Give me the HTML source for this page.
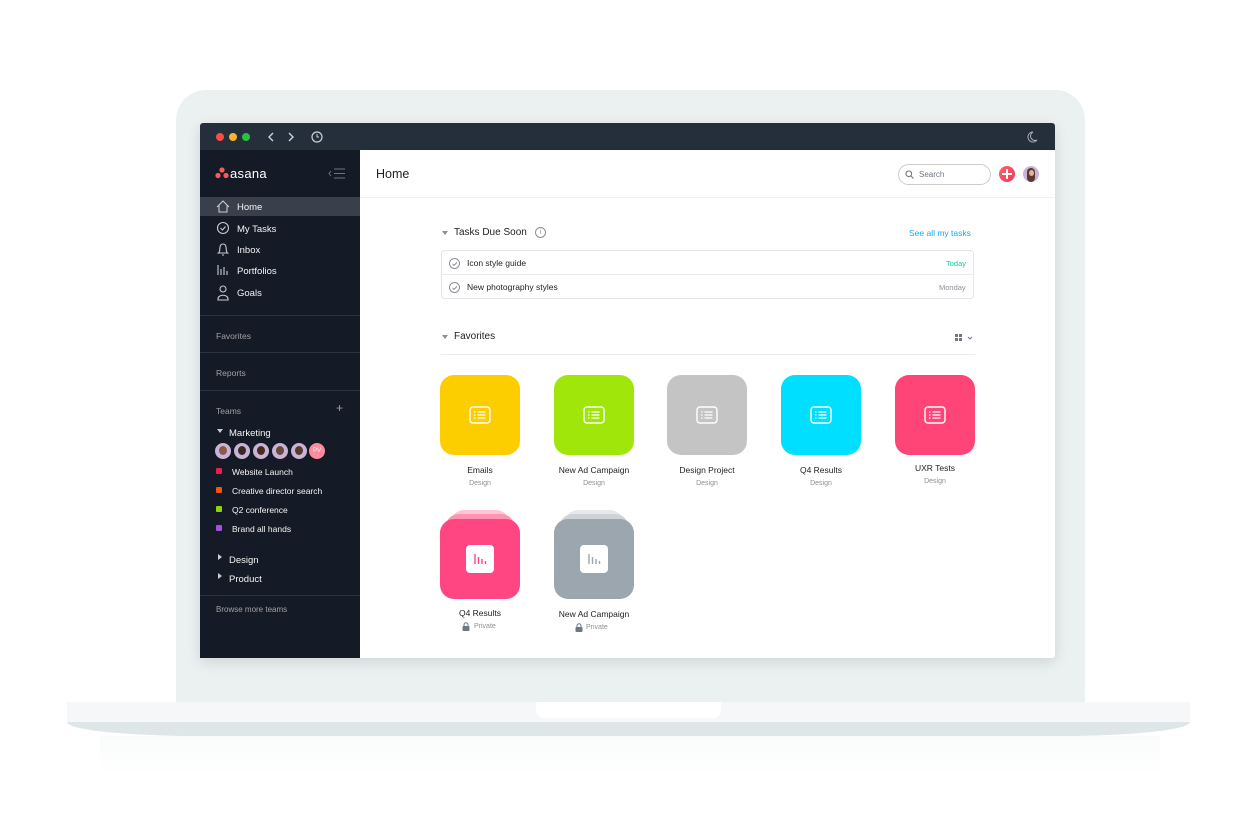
<!DOCTYPE html>
<html><head><meta charset="utf-8"><style>
*{margin:0;padding:0;box-sizing:border-box}
body{width:1256px;height:840px;background:#fff;position:relative;overflow:hidden;font-family:"Liberation Sans",sans-serif}
.a{position:absolute}
.sb{color:#f5f4f3;font-size:9.5px}
.sbg{color:#a2a0a2;font-size:8.5px}
.div{position:absolute;left:200px;width:160px;height:1px;background:#2c333f}
.tile{position:absolute;width:80px;height:80px;border-radius:14px}
.lbl{position:absolute;width:120px;text-align:center;font-size:8.5px;color:#1e1f21}
.sub{position:absolute;width:120px;text-align:center;font-size:7px;color:#8c8f94}
.ico{position:absolute;left:29px;top:31px}
.dot{position:absolute;width:6px;height:6px;border-radius:1px;left:216px}
.av{position:absolute;top:443px;width:16px;height:16px;border-radius:50%;background:#c8b3d9;overflow:hidden}
.av i{position:absolute;left:4px;top:3px;width:8px;height:9px;border-radius:50%;background:#8a5a44}
</style></head><body>
<!-- laptop -->
<div class="a" style="left:176px;top:90px;width:909px;height:620px;background:#ebf0f0;border-radius:30px 30px 0 0"></div>
<div class="a" style="left:67px;top:702px;width:1123px;height:20px;background:#f6f7f9"></div>
<div class="a" style="left:67px;top:722px;width:1123px;height:14px;background:#dfe6e7;border-radius:0 0 130px 130px/0 0 14px 14px"></div>
<div class="a" style="left:536px;top:702px;width:185px;height:16px;background:#fff;border-radius:0 0 8px 8px"></div>
<div class="a" style="left:100px;top:736px;width:1060px;height:40px;background:linear-gradient(#fafbfb,#fff)"></div>
<!-- screen -->
<div class="a" style="left:200px;top:123px;width:855px;height:535px;background:#fff;box-shadow:0 4px 14px rgba(0,0,0,.12);border-radius:3px;overflow:hidden">
</div>
<div class="a" style="left:200px;top:123px;width:855px;height:27px;background:#252e3b;border-radius:3px 3px 0 0"></div>
<div class="a" style="left:216px;top:133px;width:8px;height:8px;border-radius:50%;background:#fb4c48"></div>
<div class="a" style="left:229px;top:133px;width:8px;height:8px;border-radius:50%;background:#fdb52a"></div>
<div class="a" style="left:242px;top:133px;width:8px;height:8px;border-radius:50%;background:#27c23f"></div>
<svg class="a" style="left:266px;top:130px" width="60" height="14"><path d="M7 3l-4 4 4 4M23 3l4 4-4 4" stroke="#cfd3d8" stroke-width="1.4" fill="none"/><circle cx="51" cy="7" r="5" stroke="#cfd3d8" stroke-width="1.2" fill="none"/><path d="M51 4v3h2" stroke="#cfd3d8" fill="none"/></svg>
<svg class="a" style="left:1025px;top:130px" width="14" height="14"><path d="M8 2a5 5 0 1 0 4 8 4 4 0 0 1-4-8z" stroke="#aab" fill="none"/></svg>
<!-- sidebar -->
<div class="a" style="left:200px;top:150px;width:160px;height:508px;background:#151b26"></div>
<svg class="a" style="left:215px;top:167px" width="14" height="12"><circle cx="7" cy="3" r="2.6" fill="#f95a5f"/><circle cx="3" cy="8.5" r="2.6" fill="#f95a5f"/><circle cx="11" cy="8.5" r="2.6" fill="#f95a5f"/></svg>
<div class="a" style="left:230px;top:166px;color:#fff;font-size:13px;letter-spacing:.3px">asana</div>
<svg class="a" style="left:328px;top:168px" width="18" height="11"><path d="M3 3L1 5.5 3 8M6 1h11M6 5.5h11M6 10h11" stroke="#6d7480" fill="none"/></svg>
<div class="a" style="left:200px;top:197px;width:160px;height:19px;background:#39404b"></div>
<svg class="a" style="left:215px;top:199px" width="16" height="105" fill="none" stroke="#c9ccd1" stroke-width="1.1">
<path d="M2 8L8 2l6 6M4 6.5V13h8V6.5"/>
<circle cx="8" cy="29" r="5.5"/><path d="M5.5 29l2 2 3-3.5"/>
<path d="M3.5 54c1.5-1 1-3 1.5-6a3 3 0 0 1 6 0c.5 3 0 5 1.5 6zM7 56h2"/>
<path d="M3 66v10M6 70v6M9 68v8M12 72v4"/>
<circle cx="8" cy="90" r="3"/><path d="M3 100c0-5 10-5 10 0v1H3z"/>
</svg>
<div class="a sb" style="left:237px;top:202px">Home</div>
<div class="a sb" style="left:237px;top:224px">My Tasks</div>
<div class="a sb" style="left:237px;top:245px">Inbox</div>
<div class="a sb" style="left:237px;top:266px">Portfolios</div>
<div class="a sb" style="left:237px;top:288px">Goals</div>
<div class="div" style="top:315px"></div>
<div class="a sbg" style="left:216px;top:331px">Favorites</div>
<div class="div" style="top:352px"></div>
<div class="a sbg" style="left:216px;top:368px">Reports</div>
<div class="div" style="top:390px"></div>
<div class="a sbg" style="left:216px;top:406px">Teams</div>
<div class="a" style="left:336px;top:401px;color:#a2a0a2;font-size:12px">+</div>
<div class="a" style="left:217px;top:429px;width:0;height:0;border-left:3.5px solid transparent;border-right:3.5px solid transparent;border-top:4px solid #c9ccd1"></div>
<div class="a sb" style="left:229px;top:428px">Marketing</div>
<div class="av" style="left:215px"><i></i></div>
<div class="av" style="left:234px"><i style="background:#3b2820"></i></div>
<div class="av" style="left:253px"><i style="background:#4a2b1d"></i></div>
<div class="av" style="left:272px"><i style="background:#6b4a3a"></i></div>
<div class="av" style="left:291px"><i style="background:#5a3a2a"></i></div>
<div class="av" style="left:309px;background:#fc8b9e;color:#fff;font-size:6px;text-align:center;line-height:16px">PV</div>
<div class="dot" style="top:468px;background:#ed1c4e"></div>
<div class="a sb" style="left:232px;top:467px;font-size:8.5px">Website Launch</div>
<div class="dot" style="top:487px;background:#f0570c"></div>
<div class="a sb" style="left:232px;top:486px;font-size:8.5px">Creative director search</div>
<div class="dot" style="top:506px;background:#8fd40a"></div>
<div class="a sb" style="left:232px;top:505px;font-size:8.5px">Q2 conference</div>
<div class="dot" style="top:525px;background:#a54ee1"></div>
<div class="a sb" style="left:232px;top:524px;font-size:8.5px">Brand all hands</div>
<div class="a" style="left:218px;top:554px;border-top:3.5px solid transparent;border-bottom:3.5px solid transparent;border-left:4px solid #c9ccd1"></div>
<div class="a sb" style="left:229px;top:555px">Design</div>
<div class="a" style="left:218px;top:573px;border-top:3.5px solid transparent;border-bottom:3.5px solid transparent;border-left:4px solid #c9ccd1"></div>
<div class="a sb" style="left:229px;top:574px">Product</div>
<div class="div" style="top:595px"></div>
<div class="a sbg" style="left:216px;top:605px;font-size:8px">Browse more teams</div>
<!-- header -->
<div class="a" style="left:376px;top:167px;font-size:12.5px;color:#1e1f21">Home</div>
<div class="a" style="left:360px;top:197px;width:695px;height:1px;background:#eef0f2"></div>
<div class="a" style="left:898px;top:164px;width:93px;height:21px;border:1px solid #cfcbcb;border-radius:11px"></div>
<svg class="a" style="left:905px;top:170px" width="9" height="9"><circle cx="3.8" cy="3.8" r="2.8" stroke="#6f7782" fill="none" stroke-width="1.1"/><path d="M6 6l2.5 2.5" stroke="#6f7782" stroke-width="1.1"/></svg>
<div class="a" style="left:919px;top:170px;font-size:8px;color:#6f7782">Search</div>
<div class="a" style="left:999px;top:166px;width:16px;height:16px;border-radius:50%;background:linear-gradient(135deg,#fc636b,#f0365e)"></div>
<div class="a" style="left:1002px;top:173.2px;width:10px;height:1.6px;background:#fff"></div>
<div class="a" style="left:1006.2px;top:169px;width:1.6px;height:10px;background:#fff"></div>
<div class="a" style="left:1023px;top:166px;width:16px;height:16px;border-radius:50%;background:#c8b3d9;overflow:hidden"><div style="position:absolute;left:4px;top:2px;width:8px;height:14px;border-radius:4px;background:#5a3a2a"></div><div style="position:absolute;left:5.5px;top:4px;width:5px;height:6px;border-radius:50%;background:#e0b49a"></div></div>
<!-- tasks -->
<div class="a" style="left:442px;top:231px;border-left:3.5px solid transparent;border-right:3.5px solid transparent;border-top:4px solid #8c8f94"></div>
<div class="a" style="left:454px;top:227px;font-size:10px;color:#1e1f21">Tasks Due Soon</div>
<div class="a" style="left:535px;top:227px;width:11px;height:11px;border:1px solid #8c8f94;border-radius:50%;font-size:7px;color:#8c8f94;text-align:center;line-height:9px">i</div>
<div class="a" style="left:909px;top:228px;font-size:8.5px;color:#14aaf5">See all my tasks</div>
<div class="a" style="left:441px;top:250px;width:533px;height:49px;border:1px solid #e2e6ea;border-radius:4px"></div>
<div class="a" style="left:442px;top:274px;width:531px;height:1px;background:#e8ecee"></div>
<div class="a" style="left:449px;top:258px;width:11px;height:11px;border:1px solid #8c8f94;border-radius:50%"></div>
<div class="a" style="left:449px;top:282px;width:11px;height:11px;border:1px solid #8c8f94;border-radius:50%"></div>
<svg class="a" style="left:449px;top:258px" width="11" height="36"><path d="M3.5 5.8l1.6 1.6 2.8-3M3.5 29.8l1.6 1.6 2.8-3" stroke="#8c8f94" fill="none"/></svg>
<div class="a" style="left:467px;top:258px;font-size:8.5px;color:#1e1f21">Icon style guide</div>
<div class="a" style="left:467px;top:282px;font-size:8.5px;color:#1e1f21">New photography styles</div>
<div class="a" style="left:946px;top:259px;font-size:7.5px;color:#13ce9c">Today</div>
<div class="a" style="left:939px;top:283px;font-size:7.5px;color:#8c8f94">Monday</div>
<!-- favorites -->
<div class="a" style="left:442px;top:335px;border-left:3.5px solid transparent;border-right:3.5px solid transparent;border-top:4px solid #8c8f94"></div>
<div class="a" style="left:454px;top:331px;font-size:10px;color:#1e1f21">Favorites</div>
<svg class="a" style="left:955px;top:334px" width="20" height="8"><rect x="0" y="0" width="3" height="3" fill="#6f7782"/><rect x="4" y="0" width="3" height="3" fill="#6f7782"/><rect x="0" y="4" width="3" height="3" fill="#6f7782"/><rect x="4" y="4" width="3" height="3" fill="#6f7782"/><path d="M13 3l2 2 2-2" stroke="#6f7782" fill="none"/></svg>
<div class="a" style="left:441px;top:354px;width:534px;height:1px;background:#e8ecee"></div>

<svg width="0" height="0" style="position:absolute"><defs><g id="li"><rect x="1" y="1" width="20" height="16" rx="3" stroke="#fff" stroke-width="1.4" fill="none"/><path d="M5 6h1.5M8.5 6h8M5 9h1.5M8.5 9h8M5 12h1.5M8.5 12h8" stroke="#fff" stroke-width="1.3"/></g></defs></svg>
<div class="tile" style="left:440px;top:375px;background:#fcce00"><svg class="ico" width="22" height="18"><use href="#li"/></svg></div>
<div class="tile" style="left:554px;top:375px;background:#a0e60b"><svg class="ico" width="22" height="18"><use href="#li"/></svg></div>
<div class="tile" style="left:667px;top:375px;background:#c4c4c4"><svg class="ico" width="22" height="18"><use href="#li"/></svg></div>
<div class="tile" style="left:781px;top:375px;background:#00dfff"><svg class="ico" width="22" height="18"><use href="#li"/></svg></div>
<div class="tile" style="left:895px;top:375px;background:#ff4478"><svg class="ico" width="22" height="18"><use href="#li"/></svg></div>
<div class="lbl" style="left:420px;top:465px">Emails</div><div class="sub" style="left:420px;top:480px">Design</div>
<div class="lbl" style="left:534px;top:465px">New Ad Campaign</div><div class="sub" style="left:534px;top:480px">Design</div>
<div class="lbl" style="left:647px;top:465px">Design Project</div><div class="sub" style="left:647px;top:480px">Design</div>
<div class="lbl" style="left:761px;top:465px">Q4 Results</div><div class="sub" style="left:761px;top:480px">Design</div>
<div class="lbl" style="left:875px;top:463px">UXR Tests</div><div class="sub" style="left:875px;top:478px">Design</div>

<div class="tile" style="left:450px;top:510px;width:60px;height:30px;background:#ffc6d5"></div>
<div class="tile" style="left:445px;top:514px;width:70px;height:30px;background:#ff93b2"></div>
<div class="tile" style="left:440px;top:519px;background:#ff4683"></div>
<div class="tile" style="left:564px;top:510px;width:60px;height:30px;background:#e6e9ec"></div>
<div class="tile" style="left:559px;top:514px;width:70px;height:30px;background:#cdd3d8"></div>
<div class="tile" style="left:554px;top:519px;background:#9ca6af"></div>
<svg class="a" style="left:466px;top:545px" width="28" height="28"><rect width="28" height="28" rx="4" fill="#fff"/><path d="M9 9v10M12.5 12v7M16 14v5M19.5 16v3" stroke="#ff4683" stroke-width="1.4"/></svg>
<svg class="a" style="left:580px;top:545px" width="28" height="28"><rect width="28" height="28" rx="4" fill="#fff"/><path d="M9 9v10M12.5 12v7M16 14v5M19.5 16v3" stroke="#9ca6af" stroke-width="1.4"/></svg>
<div class="lbl" style="left:420px;top:608px">Q4 Results</div>
<div class="lbl" style="left:534px;top:609px">New Ad Campaign</div>
<svg class="a" style="left:462px;top:622px" width="8" height="9"><path d="M2 4V2.8a2 2 0 0 1 4 0V4" stroke="#6f7782" fill="none"/><rect x="0.5" y="4" width="7" height="5" rx="1" fill="#6f7782"/></svg>
<div class="a" style="left:474px;top:623px;font-size:7px;color:#8c8f94">Private</div>
<svg class="a" style="left:575px;top:623px" width="8" height="9"><path d="M2 4V2.8a2 2 0 0 1 4 0V4" stroke="#6f7782" fill="none"/><rect x="0.5" y="4" width="7" height="5" rx="1" fill="#6f7782"/></svg>
<div class="a" style="left:586px;top:624px;font-size:7px;color:#8c8f94">Private</div>
</body></html>
